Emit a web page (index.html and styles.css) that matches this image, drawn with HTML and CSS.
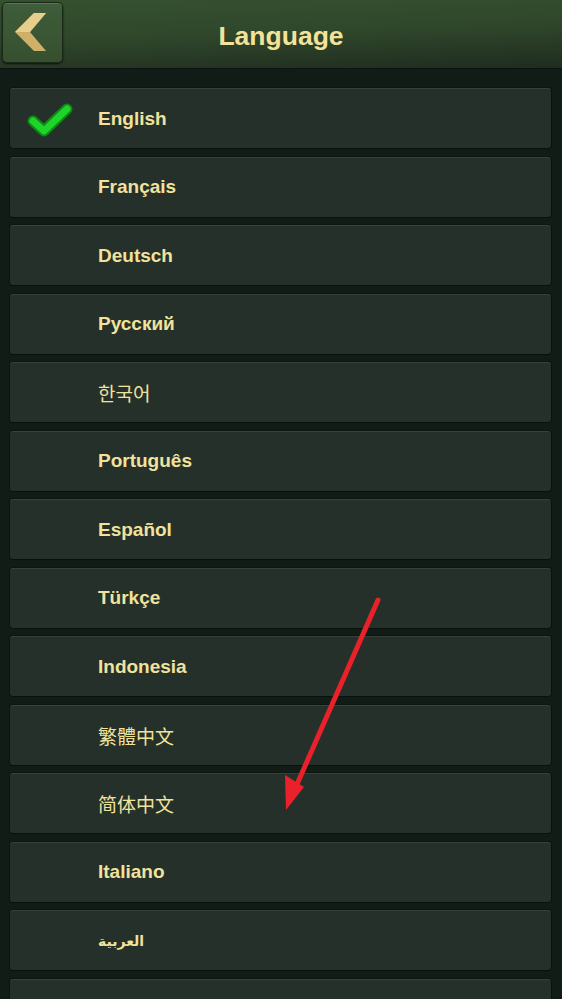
FILE: index.html
```
<!DOCTYPE html>
<html>
<head>
<meta charset="utf-8">
<link rel="stylesheet" href="styles.css">
</head>
<body>
<div class="screen">
  <header class="topbar">
    <button class="back" aria-label="Back">
      <svg width="61" height="61" viewBox="0 0 61 61"><polygon points="32,11 44,11 28,30 44,49 32,49 13,30" fill="#cfb06a"/><polygon points="32,11 44,11 28,30 13,30" fill="#e6cf8c"/></svg>
    </button>
    <h1 class="title">Language</h1>
  </header>
  <ul class="list">
    <li class="row"><span class="check"><svg width="50" height="40" viewBox="0 0 50 40"><path d="M7 22 L18 32 L41 10" fill="none" stroke="#0c8a14" stroke-width="11" stroke-linecap="round" stroke-linejoin="round"/><path d="M7 22 L18 32 L41 10" fill="none" stroke="#1fd428" stroke-width="7" stroke-linecap="round" stroke-linejoin="round"/></svg></span><span class="label">English</span></li>
    <li class="row"><span class="label">Français</span></li>
    <li class="row"><span class="label">Deutsch</span></li>
    <li class="row"><span class="label">Русский</span></li>
    <li class="row"><span class="label cjk">한국어</span></li>
    <li class="row"><span class="label">Português</span></li>
    <li class="row"><span class="label">Español</span></li>
    <li class="row"><span class="label">Türkçe</span></li>
    <li class="row"><span class="label">Indonesia</span></li>
    <li class="row"><span class="label cjk">繁體中文</span></li>
    <li class="row"><span class="label cjk">简体中文</span></li>
    <li class="row"><span class="label">Italiano</span></li>
    <li class="row"><span class="label ar">العربية</span></li>
    <li class="row"><span class="label"></span></li>
  </ul>
  <svg class="arrow" width="562" height="999" viewBox="0 0 562 999"><line x1="378" y1="600" x2="298" y2="782" stroke="#e8212b" stroke-width="5" stroke-linecap="round"/><polygon points="286,810 285,775 304,787" fill="#e8212b"/></svg>
</div>
</body>
</html>
```
FILE: styles.css
```
html, body { margin: 0; padding: 0; }
body { background: #111c16; font-family: "Liberation Sans", Arial, sans-serif; width: 562px; height: 999px; overflow: hidden; }
.screen { position: relative; width: 562px; height: 999px; background: #111c16; }
.topbar { height: 68px; display: flex; align-items: center; justify-content: center; position: relative;
  background: linear-gradient(178deg, #35512f 0%, #2f462b 50%, #1f2c1f 100%); box-shadow: 0 1px 0 #0c140f; }
.back { position: absolute; left: 2px; top: 2px; width: 61px; height: 61px; border-radius: 5px; border: 1px solid #1a2818;
  background: linear-gradient(180deg, #3f5d3a, #36502f); box-shadow: inset 0 1px 0 #5a7652, 0 1px 2px #0b120c; padding: 0;
  display: block; }
.back svg { display: block; margin: -1px; }
.title { margin: 4px 0 0; font-size: 26.5px; font-weight: bold; color: #f3e39a; }
.list { list-style: none; margin: 0; padding: 20px 0 0 10px; display: flex; flex-direction: column; gap: 8.5px; }
.row { width: 541px; height: 60px; box-sizing: border-box; border-radius: 3px; background: #25302a;
  border-top: 1px solid #36433a; box-shadow: 0 1px 0 #0a110d, 0 -1px 0 #0c150f, 1px 0 0 #0a110d, -1px 0 0 #0c150f;
  display: flex; align-items: center; position: relative; }
.label { margin-left: 88px; font-size: 19px; font-weight: bold; color: #f1e29c; }
.label.cjk { font-family: "Noto Sans CJK SC", "Noto Sans CJK KR", sans-serif; font-weight: normal; font-size: 19px; }
.label.ar { font-family: "DejaVu Sans", sans-serif; font-size: 14px; }
.check { position: absolute; left: 16px; top: 10px; }
.arrow { position: absolute; left: 0; top: 0; pointer-events: none; }
```
